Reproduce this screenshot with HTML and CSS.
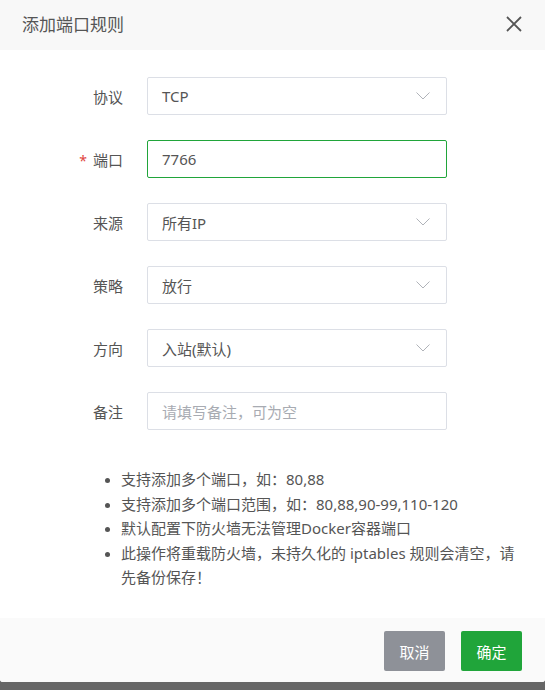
FILE: index.html
```html
<!DOCTYPE html>
<html lang="zh-CN">
<head>
<meta charset="utf-8">
<title>添加端口规则</title>
<link rel="stylesheet" href="styles.css">
</head>
<body>
<div class="dialog">
  <div class="dialog-header">
    <span class="dialog-title">添加端口规则</span>
    <span class="dialog-close">
      <svg width="16" height="16" viewBox="0 0 16 16"><path d="M1 1L15 15M15 1L1 15" stroke="#555" stroke-width="1.8" fill="none"/></svg>
    </span>
  </div>
  <div class="dialog-body">
    <div class="form">
      <div class="form-row">
        <label class="form-label">协议</label>
        <div class="field select"><span class="value">TCP</span><svg class="arrow" width="14" height="8" viewBox="0 0 14 8"><path d="M0.5 0.5L7 7L13.5 0.5" stroke="#b0b3b9" stroke-width="1" fill="none"/></svg></div>
      </div>
      <div class="form-row">
        <label class="form-label"><span class="req">*</span>端口</label>
        <div class="field active"><span class="value">7766</span></div>
      </div>
      <div class="form-row">
        <label class="form-label">来源</label>
        <div class="field select"><span class="value">所有IP</span><svg class="arrow" width="14" height="8" viewBox="0 0 14 8"><path d="M0.5 0.5L7 7L13.5 0.5" stroke="#b0b3b9" stroke-width="1" fill="none"/></svg></div>
      </div>
      <div class="form-row">
        <label class="form-label">策略</label>
        <div class="field select"><span class="value">放行</span><svg class="arrow" width="14" height="8" viewBox="0 0 14 8"><path d="M0.5 0.5L7 7L13.5 0.5" stroke="#b0b3b9" stroke-width="1" fill="none"/></svg></div>
      </div>
      <div class="form-row">
        <label class="form-label">方向</label>
        <div class="field select"><span class="value">入站(默认)</span><svg class="arrow" width="14" height="8" viewBox="0 0 14 8"><path d="M0.5 0.5L7 7L13.5 0.5" stroke="#b0b3b9" stroke-width="1" fill="none"/></svg></div>
      </div>
      <div class="form-row">
        <label class="form-label">备注</label>
        <div class="field"><span class="placeholder">请填写备注，可为空</span></div>
      </div>
    </div>
    <ul class="tips">
      <li>支持添加多个端口，如：80,88</li>
      <li>支持添加多个端口范围，如：80,88,90-99,110-120</li>
      <li>默认配置下防火墙无法管理Docker容器端口</li>
      <li>此操作将重载防火墙，未持久化的 iptables 规则会清空，请先备份保存！</li>
    </ul>
  </div>
  <div class="dialog-footer">
    <button class="btn btn-cancel">取消</button>
    <button class="btn btn-ok">确定</button>
  </div>
</div>
</body>
</html>
```

FILE: styles.css
```css
* { box-sizing: border-box; }
html, body { margin: 0; padding: 0; }
body {
  background: #666666;
  height: 690px;
  font-family: "Noto Sans", "Noto Sans CJK SC", sans-serif;
  color: #555;
}
.dialog {
  width: 545px;
  height: 682px;
  background: #fff;
  display: flex;
  flex-direction: column;
  border-radius: 0 0 3px 3px;
  overflow: hidden;
}
.dialog-header {
  height: 50px;
  background: #f8f8f8;
  display: flex;
  align-items: center;
  justify-content: space-between;
  padding: 0 23px 2px 22px;
}
.dialog-title {
  font-size: 17px;
  color: #555;
  line-height: 1;
}
.dialog-close { display: flex; margin-top: 0; }
.dialog-body {
  flex: 1;
  padding-top: 27px;
}
.form {
  display: flex;
  flex-direction: column;
  gap: 25px;
}
.form-row {
  display: flex;
  align-items: center;
}
.form-label {
  width: 123px;
  text-align: right;
  font-size: 15px;
  color: #555;
  padding-right: 0;
  margin-right: 24px;
}
.req {
  color: #e0443e;
  font-size: 14px;
  margin-right: 6px;
}
.field {
  width: 300px;
  height: 38px;
  border: 1px solid #dcdfe6;
  border-radius: 2px;
  display: flex;
  align-items: center;
  justify-content: space-between;
  padding: 0 16px 0 14px;
  font-size: 15px;
  color: #555;
}
.field.active { border-color: #20a53a; }
.placeholder { color: #a8abb2; }
.arrow { display: block; }
.tips {
  margin: 37px 0 0 0;
  padding: 0 22px 0 121px;
  font-size: 15px;
  line-height: 24.6px;
  color: #555;
}
.tips li { padding-left: 0; }
.tips li::marker { color: #555; font-size: 13px; }
.dialog-footer {
  height: 64px;
  background: #fafafa;
  display: flex;
  justify-content: flex-end;
  align-items: flex-start;
  gap: 16px;
  padding: 13px 23px 0 0;
}
.btn {
  width: 61px;
  height: 40px;
  border: none;
  border-radius: 2px;
  color: #fff;
  font-family: "Noto Sans", "Noto Sans CJK SC", sans-serif;
  font-size: 15px;
  padding: 0;
}
.btn-cancel { background: #8e9198; }
.btn-ok { background: #20a53a; }
```
